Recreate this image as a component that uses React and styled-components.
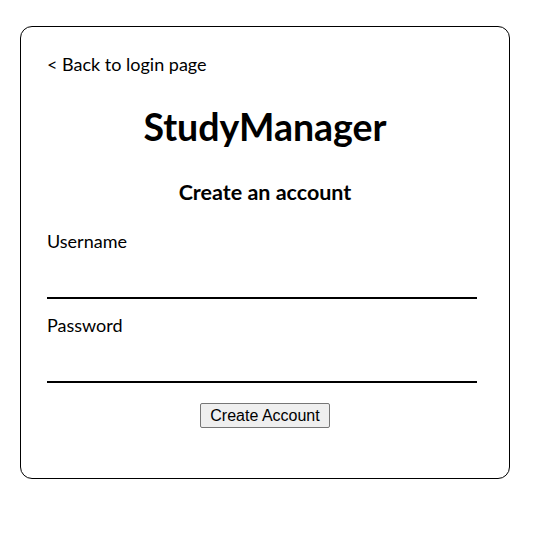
import React from 'react'
import styled, { createGlobalStyle } from 'styled-components'

const GlobalStyle = createGlobalStyle`
  body {
    margin: 0;
    background: #fff;
    font-family: Lato, "Open Sans", sans-serif;
    color: #000;
  }
`

const Page = styled.div`
  padding: 26px 20px;
`

const Card = styled.div`
  box-sizing: border-box;
  width: 490px;
  border: 1px solid #000;
  border-radius: 12px;
  padding: 26px 26px 50px 26px;
`

const BackLink = styled.a`
  display: block;
  font-size: 18px;
  line-height: 22px;
  color: #000;
  text-decoration: none;
  cursor: pointer;
`

const Title = styled.h1`
  margin: 29px 0 0 0;
  font-size: 37.5px;
  line-height: 46px;
  font-weight: bold;
  text-align: center;
`

const Subtitle = styled.h2`
  margin: 29px 0 0 0;
  font-size: 21.5px;
  line-height: 26px;
  font-weight: bold;
  text-align: center;
`

const Form = styled.form`
  display: flex;
  flex-direction: column;
`

const Label = styled.label`
  display: block;
  margin-top: ${(props) => props.$gap}px;
  font-size: 18px;
  line-height: 22px;
`

const Input = styled.input`
  box-sizing: border-box;
  width: 430px;
  height: 47px;
  border: none;
  border-bottom: 2px solid #000;
  outline: none;
  font-size: 18px;
  font-family: inherit;
  background: transparent;
  padding: 0;
`

const Button = styled.button`
  align-self: center;
  margin-top: 20px;
  height: 25px;
  padding: 1px 9px;
  font-family: Arial, "Liberation Sans", sans-serif;
  font-size: 16px;
  color: #000;
  background: #efefef;
  border: 1px solid #767676;
  border-radius: 2px;
`

export default function App() {
  return (
    <>
      <GlobalStyle />
      <Page>
        <Card>
          <BackLink>&lt; Back to login page</BackLink>
          <Title>StudyManager</Title>
          <Subtitle>Create an account</Subtitle>
          <Form onSubmit={(e) => e.preventDefault()}>
            <Label $gap={25} htmlFor="username">Username</Label>
            <Input id="username" type="text" />
            <Label $gap={15} htmlFor="password">Password</Label>
            <Input id="password" type="password" />
            <Button type="submit">Create Account</Button>
          </Form>
        </Card>
      </Page>
    </>
  )
}
